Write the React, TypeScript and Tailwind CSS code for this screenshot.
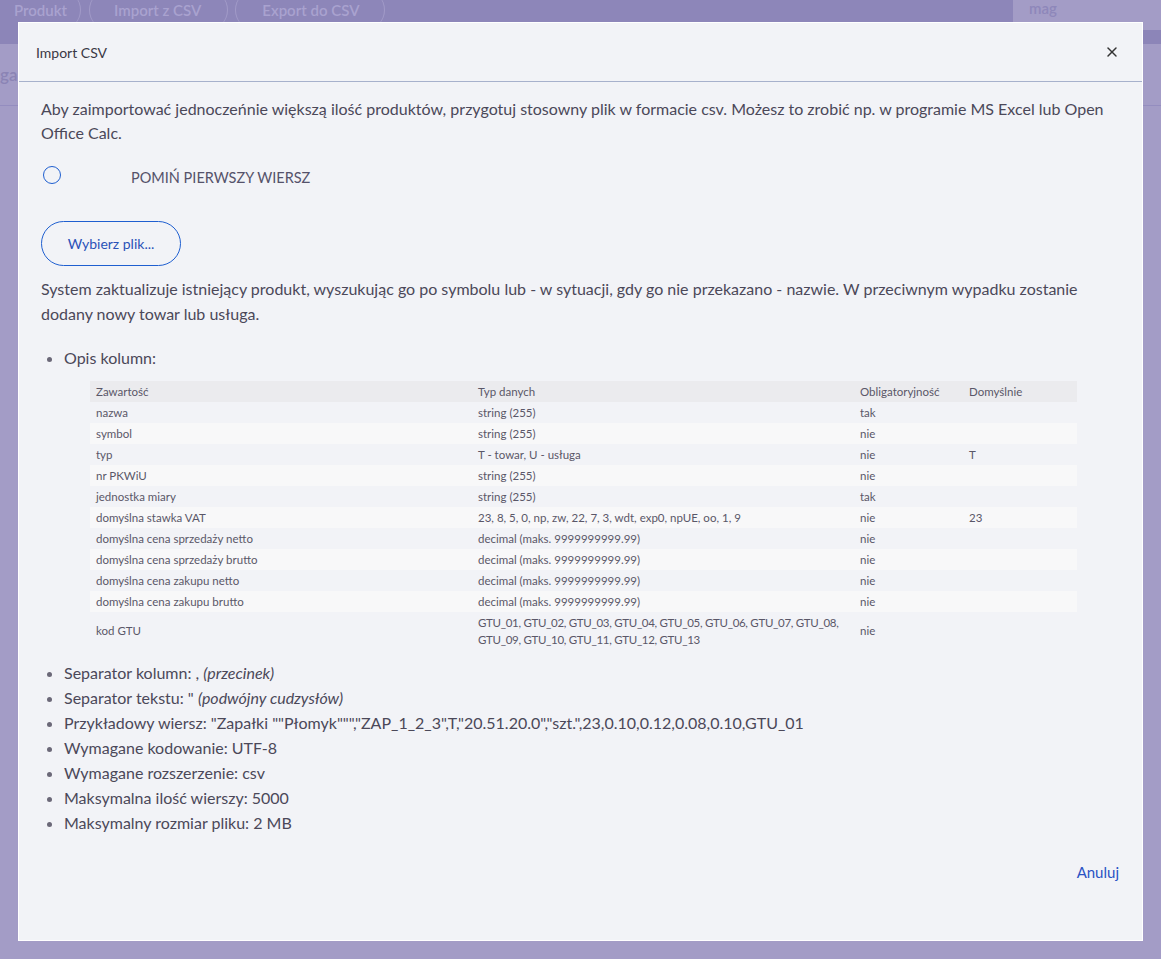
import { X } from 'lucide-react';

const rows: { name: string; type: React.ReactNode; req: string; def?: string; tight?: boolean }[] = [
  { name: 'nazwa', type: 'string (255)', req: 'tak' },
  { name: 'symbol', type: 'string (255)', req: 'nie' },
  { name: 'typ', type: 'T - towar, U - usługa', req: 'nie', def: 'T' },
  { name: 'nr PKWiU', type: 'string (255)', req: 'nie' },
  { name: 'jednostka miary', type: 'string (255)', req: 'tak' },
  { name: 'domyślna stawka VAT', type: '23, 8, 5, 0, np, zw, 22, 7, 3, wdt, exp0, npUE, oo, 1, 9', req: 'nie', def: '23' },
  { name: 'domyślna cena sprzedaży netto', type: 'decimal (maks. 9999999999.99)', req: 'nie' },
  { name: 'domyślna cena sprzedaży brutto', type: 'decimal (maks. 9999999999.99)', req: 'nie' },
  { name: 'domyślna cena zakupu netto', type: 'decimal (maks. 9999999999.99)', req: 'nie' },
  { name: 'domyślna cena zakupu brutto', type: 'decimal (maks. 9999999999.99)', req: 'nie' },
  {
    name: 'kod GTU',
    type: 'GTU_01, GTU_02, GTU_03, GTU_04, GTU_05, GTU_06, GTU_07, GTU_08, GTU_09, GTU_10, GTU_11, GTU_12, GTU_13',
    req: 'nie',
    tight: true,
  },
];

function Backdrop() {
  return (
    <div className="absolute inset-0 flex flex-col">
      <div className="flex h-[30px] items-start overflow-hidden bg-[#8d86b9]">
        <div className="-mt-[10px] flex items-center text-[15px] font-semibold text-[#a9a2cf]">
          <span className="flex h-[40px] items-center rounded-r-full border-r border-[#a29bc8] pl-[14px] pr-[13px]">
            Produkt
          </span>
          <span className="ml-[8px] flex h-[40px] items-center rounded-full border-x border-[#a29bc8] pl-[24px] pr-[26px]">
            Import z CSV
          </span>
          <span className="ml-[7px] flex h-[40px] items-center rounded-full border-x border-[#a29bc8] pl-[26px] pr-[25px]">
            Export do CSV
          </span>
        </div>
        <div className="ml-auto -mt-[3px] flex h-[33px] w-[148px] items-start bg-[#a39cc6] pl-[16px] text-[15px] font-semibold text-[#8e87ba]">
          mag
        </div>
      </div>
      <div className="h-[14px] bg-[#8c85b8]" />
      <div className="flex h-[62px] items-center border-b border-[#948dbf] bg-[#a39cc6] text-[17px] font-semibold text-[#8b84b5]">
        ga
      </div>
      <div className="flex-1 bg-[#a39cc6]" />
    </div>
  );
}

export default function App() {
  return (
    <div
      className="relative h-[959px] w-full overflow-hidden bg-[#a39cc6] text-[#4b4859]"
      style={{ fontFamily: 'Lato, "Noto Sans", sans-serif' }}
    >
      <Backdrop />

      <div className="absolute left-[18px] top-[22px] flex h-[919px] w-[1125px] flex-col border border-white bg-[#f2f3f7]">
        <div className="flex h-[59px] shrink-0 items-center justify-between border-b border-[#a7b1cc] pl-[17px] pr-[22px]">
          <span className="text-[14px] text-[#3a3845]">Import CSV</span>
          <X size={16} strokeWidth={2.2} className="text-[#333]" />
        </div>

        <div className="flex flex-1 flex-col px-[22px] pt-[15px]">
          <p className="text-[16px] leading-[24px]">
            Aby zaimportować jednoczeńnie większą ilość produktów, przygotuj stosowny plik w formacie csv. Możesz to
            zrobić np. w programie MS Excel lub Open Office Calc.
          </p>

          <label className="mt-[16px] flex items-center">
            <span className="ml-[2px] h-[18px] w-[18px] rounded-full border-[1.5px] border-[#1f5fd0]" />
            <span className="ml-[70px] mt-[6px] text-[14.5px] uppercase text-[#55526a]">Pomiń pierwszy wiersz</span>
          </label>

          <div className="mt-[32px]">
            <button
              type="button"
              className="h-[45px] w-[140px] rounded-full border border-[#1f5fd0] text-[14px] text-[#2a52b8]"
            >
              Wybierz plik...
            </button>
          </div>

          <p className="mt-[10px] text-[16px] leading-[25px]">
            System zaktualizuje istniejący produkt, wyszukując go po symbolu lub - w sytuacji, gdy go nie przekazano -
            nazwie. W przeciwnym wypadku zostanie dodany nowy towar lub usługa.
          </p>

          <ul className="mt-[19px] list-disc pl-[23px] text-[16px] leading-[25px] marker:text-[#6b6878]">
            <li>
              Opis kolumn:
              <table className="mb-[10px] ml-[26px] mt-[11px] w-[987px] table-fixed border-collapse text-[11.5px] leading-[17px] text-[#5a5768]">
                <colgroup>
                  <col className="w-[382px]" />
                  <col className="w-[382px]" />
                  <col className="w-[109px]" />
                  <col className="w-[114px]" />
                </colgroup>
                <thead>
                  <tr className="bg-[#ebebee]">
                    <th className="h-[21px] px-[6px] text-left font-normal">Zawartość</th>
                    <th className="px-[6px] text-left font-normal">Typ danych</th>
                    <th className="px-[6px] text-left font-normal">Obligatoryjność</th>
                    <th className="px-[6px] text-left font-normal">Domyślnie</th>
                  </tr>
                </thead>
                <tbody>
                  {rows.map((r, i) => (
                    <tr key={r.name} className={i % 2 === 1 ? 'bg-[#f8f8f9]' : ''}>
                      <td className="h-[21px] px-[6px] py-[2px] align-middle">{r.name}</td>
                      <td className={`px-[6px] py-[2px] align-middle ${r.tight ? 'tracking-[-0.3px]' : ''}`}>
                        {r.type}
                      </td>
                      <td className="px-[6px] py-[2px] align-middle">{r.req}</td>
                      <td className="px-[6px] py-[2px] align-middle">{r.def}</td>
                    </tr>
                  ))}
                </tbody>
              </table>
            </li>
            <li>
              Separator kolumn: , <i>(przecinek)</i>
            </li>
            <li>
              Separator tekstu: " <i>(podwójny cudzysłów)</i>
            </li>
            <li>
              Przykładowy wiersz: "Zapałki ""Płomyk""","ZAP_1_2_3",T,"20.51.20.0","szt.",23,0.10,0.12,0.08,0.10,GTU_01
            </li>
            <li>Wymagane kodowanie: UTF-8</li>
            <li>Wymagane rozszerzenie: csv</li>
            <li>Maksymalna ilość wierszy: 5000</li>
            <li>Maksymalny rozmiar pliku: 2 MB</li>
          </ul>

          <div className="mt-[26px] flex justify-end pr-[1px]">
            <button type="button" className="text-[15px] text-[#2a52c4]">
              Anuluj
            </button>
          </div>
        </div>
      </div>
    </div>
  );
}
